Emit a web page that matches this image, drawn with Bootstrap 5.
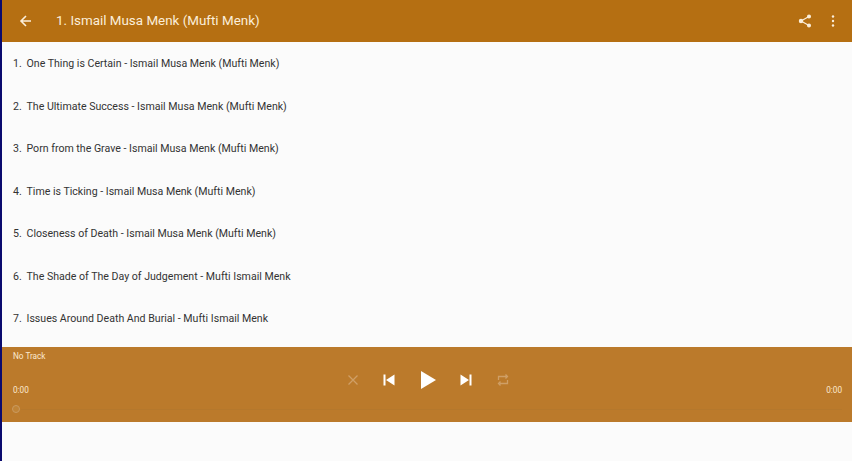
<!DOCTYPE html>
<html lang="en">
<head>
    <meta charset="UTF-8">
    <meta name="viewport" content="width=device-width, initial-scale=1.0">
    <link rel="stylesheet" href="https://cdn.jsdelivr.net/npm/bootstrap@5.3.3/dist/css/bootstrap.min.css">
    <title>Ismail Musa Menk</title>
    <style>
        html, body { height: 461px; overflow: hidden; }
        body {
            font-family: Roboto, "Liberation Sans", sans-serif;
            background: #fbfbfb;
            border-left: 2px solid #0a0a6e;
            color: #333;
        }
        .app-bar { height: 42px; background: #b56f12; color: #fbeeda; padding: 0 17px 0 17px; }
        .app-title { font-size: 13.4px; margin-left: 23px; }
        .app-actions { gap: 19px; }
        .track-list { height: 305px; padding-top: 1px; }
        .track-row { height: 42.5px; font-size: 10.6px; padding-left: 11px; }
        .track-num { width: 13.5px; }
        .player { height: 75px; background: #bb7a2b; color: #fbe9cf; font-size: 8.2px; padding: 0 10px 0 11px; }
        .player-title { height: 18px; padding-top: 4px; line-height: 10px; }
        .player-mid { height: 43px; }
        .player-times { width: 50px; padding-top: 19px; }
        .player-ctrl { height: 30px; gap: 22.5px; }
        .seek-line { height: 14px; }
        .seek-line::before { content: ""; position: absolute; left: 8px; right: 0; top: 1px; height: 1px; background: #b5782c; }
        .seek-knob { position: absolute; left: -1px; top: -3px; width: 8px; height: 8px; border-radius: 50%; border: 1px solid #c99a60; background: #c08437; }
        .ctrl-icon { display: block; }
    </style>
</head>
<body class="d-flex flex-column">
    <div class="app-bar d-flex align-items-center">
        <svg width="14" height="14" viewBox="0 0 14 14" fill="none" stroke="#fbeeda" stroke-width="1.6"><path d="M12 7H2M7 2 2 7l5 5"/></svg>
        <div class="app-title">1. Ismail Musa Menk (Mufti Menk)</div>
        <div class="ms-auto d-flex align-items-center app-actions">
            <svg width="14" height="14" viewBox="0 0 14 14" fill="#fbeeda" stroke="#fbeeda" stroke-width="1.2"><circle cx="11" cy="2.5" r="1.4"/><circle cx="3" cy="7" r="1.6"/><circle cx="11" cy="11.5" r="1.4"/><path d="M11 2.5 3 7l8 4.5" fill="none"/></svg>
            <svg width="4" height="12" viewBox="0 0 4 12" fill="#fbeeda"><circle cx="2" cy="1.5" r="1.2"/><circle cx="2" cy="6" r="1.2"/><circle cx="2" cy="10.5" r="1.2"/></svg>
        </div>
    </div>
    <div class="track-list">
        <div class="track-row d-flex align-items-center"><span class="track-num">1.</span>One Thing is Certain - Ismail Musa Menk (Mufti Menk)</div>
        <div class="track-row d-flex align-items-center"><span class="track-num">2.</span>The Ultimate Success - Ismail Musa Menk (Mufti Menk)</div>
        <div class="track-row d-flex align-items-center"><span class="track-num">3.</span>Porn from the Grave - Ismail Musa Menk (Mufti Menk)</div>
        <div class="track-row d-flex align-items-center"><span class="track-num">4.</span>Time is Ticking - Ismail Musa Menk (Mufti Menk)</div>
        <div class="track-row d-flex align-items-center"><span class="track-num">5.</span>Closeness of Death - Ismail Musa Menk (Mufti Menk)</div>
        <div class="track-row d-flex align-items-center"><span class="track-num">6.</span>The Shade of The Day of Judgement - Mufti Ismail Menk</div>
        <div class="track-row d-flex align-items-center"><span class="track-num">7.</span>Issues Around Death And Burial - Mufti Ismail Menk</div>
    </div>
    <div class="player">
        <div class="player-title">No Track</div>
        <div class="player-mid d-flex">
            <div class="player-times">0:00</div>
            <div class="player-ctrl flex-grow-1 d-flex justify-content-center align-items-center">
                <svg class="ctrl-icon" width="14" height="14" viewBox="0 0 14 14" fill="none" stroke="#cf9f66" stroke-width="1.3"><path d="M2.5 2.500l9 9M2.500 11.500l9-9"/></svg>
                <svg class="ctrl-icon" width="14" height="14" viewBox="0 0 14 14" fill="#fff"><path d="M1.500 1.500h2v11h-2zM12.500 1.500v11L4 7z"/></svg>
                <svg class="ctrl-icon" width="18" height="20" viewBox="0 0 18 20" fill="#fff"><path d="M2 1l15 9-15 9z"/></svg>
                <svg class="ctrl-icon" width="14" height="14" viewBox="0 0 14 14" fill="#fff"><path d="M10.500 1.500h2v11h-2zM1.500 1.500v11L10 7z"/></svg>
                <svg class="ctrl-icon" width="14" height="14" viewBox="0 0 14 14" fill="none" stroke="#cf9f66" stroke-width="1.3"><path d="M2.500 7V3.500h8M11.500 7v3.500h-8M9.500 1.500l2 2-2 2M4.500 8.500l-2 2 2 2"/></svg>
            </div>
            <div class="player-times text-end">0:00</div>
        </div>
        <div class="seek-line position-relative"><div class="seek-knob"></div></div>
    </div>
</body>
</html>
